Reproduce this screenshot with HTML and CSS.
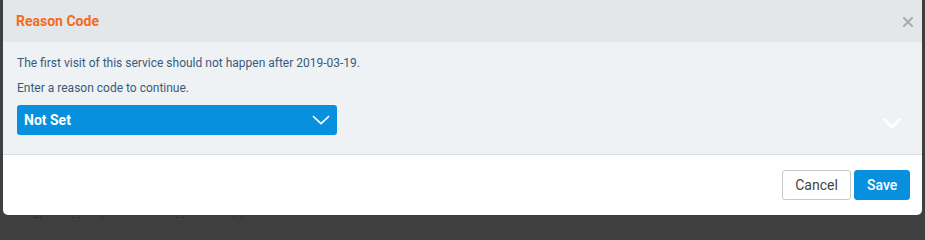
FILE: index.html
```html
<!DOCTYPE html>
<html>
<head>
<meta charset="utf-8">
<link rel="stylesheet" href="styles.css">
</head>
<body>
<div class="modal">
  <div class="modal-header">
    <h2 class="modal-title">Reason Code</h2>
    <button class="close" aria-label="Close">
      <svg width="10" height="10" viewBox="0 0 10 10"><path d="M1 1L9 9M9 1L1 9" stroke="#adadad" stroke-width="2.2" stroke-linecap="square"/></svg>
    </button>
  </div>
  <div class="modal-body">
    <p class="msg">The first visit of this service should not happen after 2019-03-19.</p>
    <p class="msg">Enter a reason code to continue.</p>
    <div class="row">
      <div class="select">
        <span class="select-label">Not Set</span>
        <svg class="chev" width="18" height="10" viewBox="0 0 18 10"><path d="M1 1.2L9 8.6L17 1.2" fill="none" stroke="#fff" stroke-width="1.6"/></svg>
      </div>
      <svg class="chev-big" width="20" height="12" viewBox="0 0 20 12"><path d="M2 2L10 10L18 2" fill="none" stroke="#fff" stroke-width="3"/></svg>
    </div>
  </div>
  <div class="modal-footer">
    <button class="btn btn-default">Cancel</button>
    <button class="btn btn-primary">Save</button>
  </div>
</div>
<div class="page-text">Services are filtered by department: Homemaking</div>
</body>
</html>
```
FILE: styles.css
```css
html, body {
  margin: 0;
  padding: 0;
  height: 218px;
  overflow: hidden;
}
body {
  background: #3f3f3f;
  font-family: Roboto, "Liberation Sans", Arial, sans-serif;
}
.modal {
  margin: 0 3px 0 3px;
  width: 919px;
  height: 215px;
  background: #fff;
  border-radius: 0 0 5px 5px;
  display: flex;
  flex-direction: column;
  overflow: hidden;
}
.modal-header {
  height: 42px;
  background: #e4e7ea;
  display: flex;
  align-items: center;
  justify-content: space-between;
  padding: 0 9px 0 13px;
  box-sizing: border-box;
  flex: none;
}
.modal-title {
  margin: 0;
  font-size: 14px;
  font-weight: 700;
  color: #f26b1d;
  line-height: 18px;
}
.close {
  border: 0;
  background: none;
  padding: 0;
  width: 10px;
  height: 10px;
  display: flex;
  margin-top: 1px;
}
.modal-body {
  background: #eff2f5;
  border-bottom: 1px solid #dadde1;
  padding: 12px 20px 19px 14px;
  flex: none;
}
.msg {
  margin: 0 0 7px 0;
  font-size: 12px;
  line-height: 18px;
  color: #3a5a7a;
}
.row {
  display: flex;
  align-items: center;
  justify-content: space-between;
  margin-top: 8px;
}
.select {
  width: 320px;
  height: 30px;
  background: #0790de;
  border-radius: 3px;
  display: flex;
  align-items: center;
  justify-content: space-between;
  padding: 0 7px 0 7px;
  box-sizing: border-box;
}
.select-label {
  color: #fff;
  font-weight: 700;
  font-size: 14px;
}
.chev-big {
  margin-top: 6px;
}
.modal-footer {
  flex: 1;
  display: flex;
  justify-content: flex-end;
  align-items: center;
  gap: 3px;
  padding: 0 12px 1px 0;
}
.btn {
  height: 30px;
  font-family: Roboto, "Liberation Sans", Arial, sans-serif;
  font-size: 14px;
  border-radius: 3px;
  padding: 0 12px;
  box-sizing: border-box;
}
.btn-default {
  background: #fff;
  border: 1px solid #c8c8c8;
  color: #444;
  width: 69px;
}
.btn-primary {
  background: #0790de;
  border: 1px solid #0790de;
  color: #fff;
  font-weight: 500;
  width: 56px;
}
.page-text {
  color: #1e1e1e;
  font-size: 14px;
  line-height: 14px;
  margin-top: 1px;
  padding-left: 2px;
  text-indent: -50px;
}
```
